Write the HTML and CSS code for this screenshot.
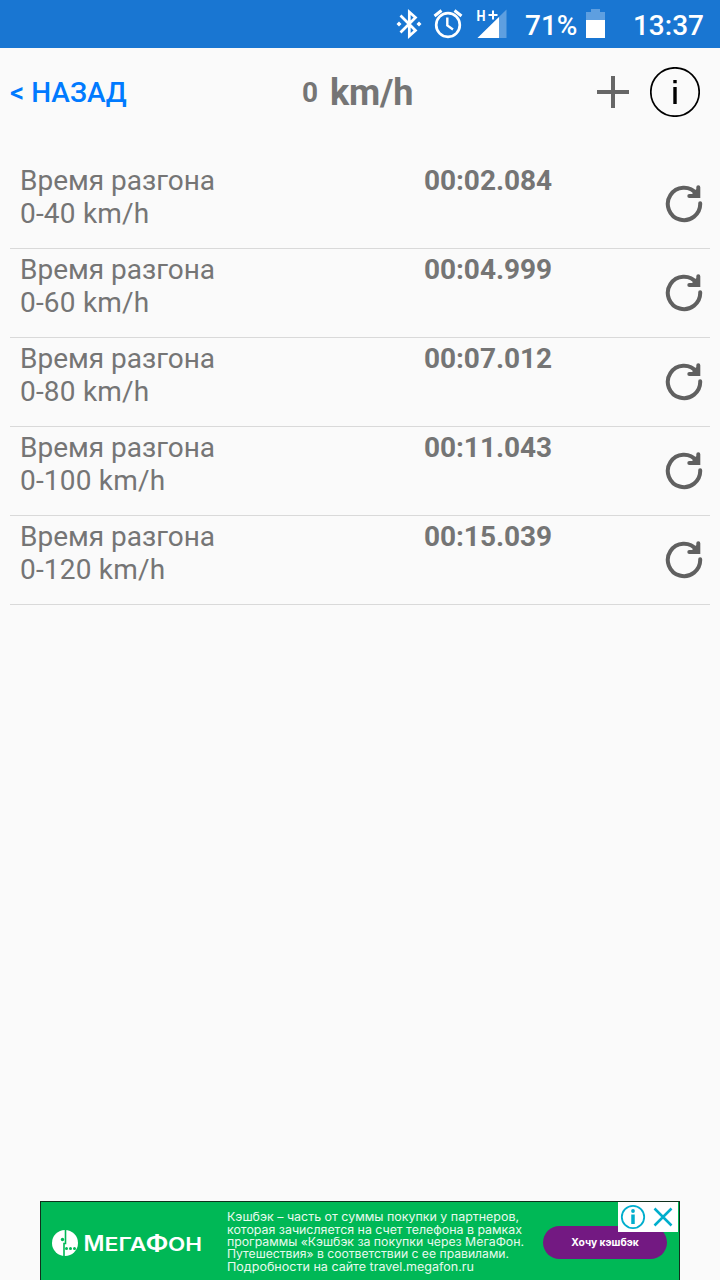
FILE: index.html
```html
<!DOCTYPE html>
<html lang="ru">
<head>
    <meta charset="UTF-8">
    <meta name="viewport" content="width=device-width, initial-scale=1.0">
    <title>Время разгона</title>
    <link rel="stylesheet" href="styles.css">
</head>
<body>
    <!-- shared icon for the reset buttons -->
    <svg class="sprite">
        <symbol id="reload" viewBox="0 0 40 40">
            <path d="M36.200 19.300A16.200 16.200 0 1 1 32.500 9.600" fill="none" stroke="currentColor" stroke-width="4" stroke-linecap="round"/>
            <path d="M34.300 3.300V12H25.300" fill="none" stroke="currentColor" stroke-width="4" stroke-linecap="round"/>
            <path d="M29 7L33 5L34 12H28Z" fill="currentColor"/>
        </symbol>
    </svg>

    <div class="status-bar">
        <svg class="status-icons" viewBox="0 0 120 48">
            <g fill="none" stroke="#fff" stroke-width="2.700">
                <path d="M5.500 15.500L20.500 30.500L14.300 36V12L20.500 17.500L5.500 32.500"/>
                <circle cx="53" cy="25" r="11.800"/>
                <path d="M52.300 17.500V25.500L58 29.500" stroke-width="2.400"/>
                <path d="M39.500 16L46.500 10.500M59.500 10.500L66.500 16" stroke-width="3"/>
            </g>
            <path d="M4 21.500L6.500 24L4 26.500L1.500 24ZM24 21.500L26.500 24L24 26.500L21.500 24Z" fill="#fff"/>
            <path d="M111.500 9.500V38H82.500Z" fill="#5e9fe0"/>
            <path d="M104 17V38H82.500Z" fill="#fff"/>
            <text x="81.500" y="20.700" class="net" textLength="9" lengthAdjust="spacingAndGlyphs">H</text>
            <path d="M93.500 15H102.500M98 10.500V19.500" stroke="#fff" stroke-width="2"/>
        </svg>
        <span class="percent">71%</span>
        <svg class="battery" viewBox="0 0 19 30">
            <path d="M5 0H14V3H19V12H0V3H5Z" fill="#5e9fe0"/>
            <path d="M0 11H19V29H0Z" fill="#fff"/>
        </svg>
        <span class="clock">13:37</span>
    </div>

    <header class="header">
        <a href="#" class="back">&lt; НАЗАД</a>
        <div class="speed"><span class="value">0</span><span class="unit">km/h</span></div>
        <svg class="plus" viewBox="0 0 32 32"><path d="M0 16H32M16 0V32" stroke="#666" stroke-width="4"/></svg>
        <svg class="info" viewBox="0 0 50 50">
            <circle cx="25" cy="25" r="24.200" fill="none" stroke="#000" stroke-width="1.700"/>
            <path d="M25 20V37M25 13V16.300" stroke="#000" stroke-width="3.400"/>
        </svg>
    </header>

    <main class="results">
        <div class="row">
            <div class="label">Время разгона<br><span class="range">0-40 km/h</span></div>
            <div class="time">00:02.084</div>
            <svg class="reload"><use href="#reload"/></svg>
        </div>
        <div class="row">
            <div class="label">Время разгона<br><span class="range">0-60 km/h</span></div>
            <div class="time">00:04.999</div>
            <svg class="reload"><use href="#reload"/></svg>
        </div>
        <div class="row">
            <div class="label">Время разгона<br><span class="range">0-80 km/h</span></div>
            <div class="time">00:07.012</div>
            <svg class="reload"><use href="#reload"/></svg>
        </div>
        <div class="row">
            <div class="label">Время разгона<br><span class="range">0-100 km/h</span></div>
            <div class="time">00:11.043</div>
            <svg class="reload"><use href="#reload"/></svg>
        </div>
        <div class="row">
            <div class="label">Время разгона<br><span class="range">0-120 km/h</span></div>
            <div class="time">00:15.039</div>
            <svg class="reload"><use href="#reload"/></svg>
        </div>
    </main>

    <footer class="banner">
        <svg class="banner-logo" viewBox="0 0 150 28">
            <circle cx="13" cy="14" r="13" fill="#fff"/>
            <path d="M13.500 0V14.500H12V28" fill="none" stroke="#00b856" stroke-width="1.600"/>
            <g fill="#00b856">
                <circle cx="10.500" cy="10.500" r="1.700"/>
                <circle cx="14.500" cy="19.500" r="1.500"/>
                <circle cx="18.500" cy="19.500" r="1.500"/>
                <circle cx="22.500" cy="19.500" r="1.500"/>
            </g>
            <text y="21.500" class="brand"><tspan x="31.500" class="big" textLength="21" lengthAdjust="spacingAndGlyphs">М</tspan><tspan x="52.500" textLength="42" lengthAdjust="spacingAndGlyphs">ЕГА</tspan><tspan x="93.500" class="big" textLength="23" lengthAdjust="spacingAndGlyphs">Ф</tspan><tspan x="116" textLength="34" lengthAdjust="spacingAndGlyphs">ОН</tspan></text>
        </svg>
        <svg class="banner-text" viewBox="0 0 300 70">
            <text x="0" y="15.300" textLength="292" lengthAdjust="spacingAndGlyphs">Кэшбэк – часть от суммы покупки у партнеров,</text>
            <text x="0" y="27.600" textLength="295" lengthAdjust="spacingAndGlyphs">которая зачисляется на счет телефона в рамках</text>
            <text x="0" y="40" textLength="297" lengthAdjust="spacingAndGlyphs">программы «Кэшбэк за покупки через МегаФон.</text>
            <text x="0" y="52.300" textLength="282" lengthAdjust="spacingAndGlyphs">Путешествия» в соответствии с ее правилами.</text>
            <text x="0" y="64.700" textLength="247" lengthAdjust="spacingAndGlyphs">Подробности на сайте travel.megafon.ru</text>
        </svg>
        <a href="#" class="banner-button">Хочу кэшбэк</a>
        <svg class="ad-choices" viewBox="0 0 60 30">
            <path d="M0 0H60V30H0Z" fill="#fff"/>
            <g fill="none" stroke="#00aecd">
                <circle cx="15" cy="15" r="11.200" stroke-width="1.800"/>
                <path d="M15 12.500V22" stroke-width="3.500"/>
                <path d="M36.500 6.500L53.500 23.500M53.500 6.500L36.500 23.500" stroke-width="2.500"/>
            </g>
            <circle cx="15" cy="9" r="1.900" fill="#00aecd"/>
        </svg>
    </footer>
</body>
</html>
```
FILE: styles.css
```css
:root {
    --blue: #1976d2;
    --bg: #fafafa;
    --text: #757575;
    --green: #00b856;
}

* {
    margin: 0;
    padding: 0;
    box-sizing: border-box;
}

body {
    height: 1280px;
    display: flex;
    flex-direction: column;
    overflow: hidden;
    background: var(--bg);
    color: var(--text);
    font-family: Roboto, sans-serif;
    font-size: 28px;
    line-height: 33px;
}

svg {
    display: block;
    flex-shrink: 0;
}

a {
    text-decoration: none;
}

.sprite {
    display: none;
}

.status-bar {
    height: 48px;
    padding: 0 16px 0 395px;
    display: flex;
    align-items: center;
    background: var(--blue);
    color: #fff;
    font-weight: 500;
    white-space: nowrap;
}

.status-icons {
    width: 120px;
    height: 48px;
}

.net {
    fill: #fff;
    font-size: 14.5px;
    font-weight: 700;
}

.percent {
    width: 61px;
    margin-left: 10px;
    padding-top: 3px;
}

.battery {
    width: 19px;
    height: 30px;
}

.clock {
    margin-left: auto;
    padding-top: 3px;
}

.header {
    height: 88px;
    padding: 0 20px 0 10px;
    display: flex;
    align-items: center;
}

.back {
    width: 292px;
    color: #007aff;
    font-weight: 500;
}

.speed {
    display: flex;
    align-items: center;
    gap: 12px;
    font-weight: 700;
}

.unit {
    padding-top: 2px;
    font-size: 36px;
    letter-spacing: -0.2px;
}

.plus {
    width: 32px;
    height: 32px;
    margin-left: auto;
}

.info {
    width: 50px;
    height: 50px;
    margin-left: 21px;
}

.results {
    padding: 24px 10px 0;
}

.row {
    height: 89px;
    padding: 4px 6px 0 10px;
    display: flex;
    border-bottom: 1px solid #d9d9d9;
}

.label {
    width: 404px;
}

.range {
    letter-spacing: 0.2px;
}

.time {
    font-weight: 700;
    letter-spacing: -0.05px;
}

.reload {
    width: 40px;
    height: 40px;
    margin: 20px 0 0 auto;
    color: #606060;
}

.banner {
    position: relative;
    width: 640px;
    height: 79px;
    margin: auto auto 0;
    padding-left: 11px;
    display: flex;
    background: var(--green);
    border: 1px solid #10301c;
    border-bottom: 0;
}

.banner-logo {
    width: 150px;
    height: 28px;
    margin-top: 27px;
}

.brand {
    fill: #fff;
    font-family: Inter, sans-serif;
    font-size: 19px;
    font-weight: 600;
}

.big {
    font-size: 22px;
}

.banner-text {
    width: 300px;
    height: 70px;
    margin: 4px 0 0 25px;
    fill: #e8faee;
    font-family: Inter, sans-serif;
    font-size: 11.4px;
}

.banner-button {
    width: 124px;
    height: 33px;
    margin: 24px 0 0 16px;
    border-radius: 17px;
    background: #731982;
    color: #fff;
    font-family: Inter, sans-serif;
    font-size: 10.3px;
    font-weight: 700;
    line-height: 33px;
    text-align: center;
}

/* sits over the corner of the ad */
.ad-choices {
    position: absolute;
    top: 0;
    right: 1px;
    width: 60px;
    height: 30px;
}
```
